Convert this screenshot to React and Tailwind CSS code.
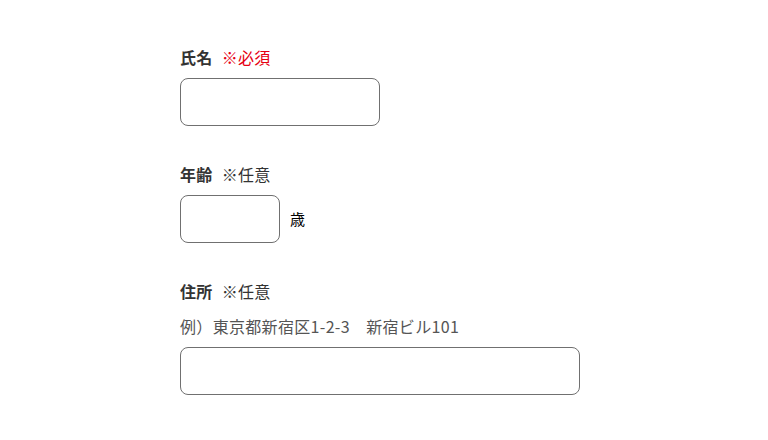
const font = { fontFamily: '"Noto Sans CJK JP", "Noto Sans", sans-serif' };

const Label = ({ title, note, required }) => (
  <div className="flex items-start gap-[9px] h-6 leading-[22px] mb-[9px]">
    <span className="text-base font-bold text-[#333]">{title}</span>
    <span className={`text-base ${required ? "text-[#e60012]" : "text-[#333]"}`}>{note}</span>
  </div>
);

export default function App() {
  return (
    <div className="w-[768px] h-[440px] bg-white overflow-hidden tracking-[0.02em]" style={font}>
      <form className="pl-[180px] pt-[45px] flex flex-col gap-9">
        <div>
          <Label title="氏名" note="※必須" required />
          <input
            type="text"
            className="block w-[200px] h-12 border border-[#707070] rounded-lg px-3 outline-none"
          />
        </div>

        <div>
          <Label title="年齢" note="※任意" />
          <div className="flex items-center gap-[10px]">
            <input
              type="text"
              className="block w-[100px] h-12 border border-[#707070] rounded-lg px-3 outline-none"
            />
            <span className="text-[15px] text-black">歳</span>
          </div>
        </div>

        <div>
          <Label title="住所" note="※任意" />
          <p className="text-base leading-6 text-[#555] mt-[11px] mb-[9px]">
            例）東京都新宿区1-2-3　新宿ビル101
          </p>
          <input
            type="text"
            className="block w-[400px] h-12 border border-[#707070] rounded-lg px-3 outline-none"
          />
        </div>
      </form>
    </div>
  );
}
